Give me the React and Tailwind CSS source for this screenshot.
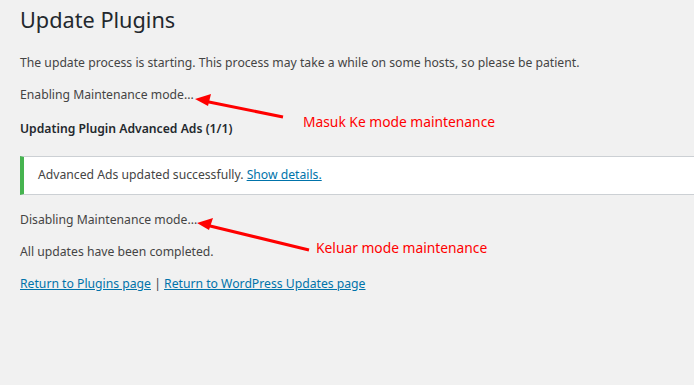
export default function App() {
  return (
    <div className="relative min-h-[385px] w-[694px] overflow-hidden bg-[#f1f1f1] font-['Noto_Sans',sans-serif] text-[12.2px] text-[#444]">
      <div className="pl-5 pt-[5px]">
        <h1 className="text-[21.7px] leading-[30px] font-normal text-[#23282d]">Update Plugins</h1>
        <p className="mt-[18px] leading-[19px]">
          The update process is starting. This process may take a while on some hosts, so please be patient.
        </p>
        <p className="mt-[13px] leading-[19px]">Enabling Maintenance mode...</p>
        <h2 className="mt-[15px] text-[12.2px] leading-[19px] font-semibold text-[#23282d]">Updating Plugin Advanced Ads (1/1)</h2>
        <div className="mt-[18px] flex h-[39px] items-center border-y border-[#ccd0d4] border-l-4 border-l-[#46b450] bg-white pl-[14px]">
          Advanced Ads updated successfully.&nbsp;<a className="text-[#0073aa] underline">Show details.</a>
        </div>
        <p className="mt-[15px] leading-[19px]">Disabling Maintenance mode...</p>
        <p className="mt-[13px] leading-[19px]">All updates have been completed.</p>
        <p className="mt-[13px] leading-[19px]">
          <a className="text-[#0073aa] underline">Return to Plugins page</a> |{' '}
          <a className="text-[#0073aa] underline">Return to WordPress Updates page</a>
        </p>
      </div>

      <svg className="absolute left-0 top-0" width="694" height="385">
        <g stroke="#ff0000" strokeWidth="3" fill="#ff0000">
          <line x1="283" y1="117" x2="204" y2="101" />
          <polygon points="195,99 211,94 208,106" stroke="none" />
          <line x1="309" y1="250" x2="206" y2="225" />
          <polygon points="197,223 213,218 209,230" stroke="none" />
        </g>
      </svg>
      <div className="absolute left-[303px] top-[112px] text-[13.8px] leading-[20px] text-[#ff0000]">Masuk Ke mode maintenance</div>
      <div className="absolute left-[316px] top-[238px] text-[13.8px] leading-[20px] text-[#ff0000]">Keluar mode maintenance</div>
    </div>
  );
}
